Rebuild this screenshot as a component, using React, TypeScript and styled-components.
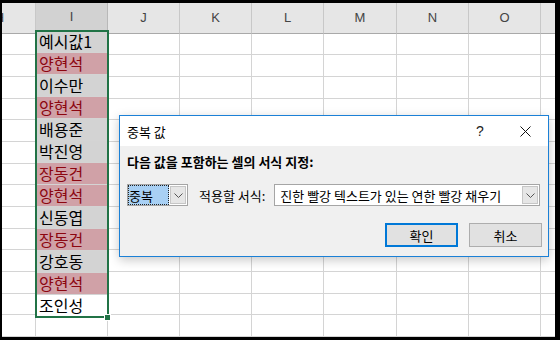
import React from "react";
import styled, { createGlobalStyle } from "styled-components";

const GlobalStyle = createGlobalStyle`
  html, body { margin: 0; padding: 0; }
  body { font-family: "Noto Sans CJK KR", "Noto Sans", sans-serif; }
`;

type Tone = "gray" | "pink" | "white";

const values: { text: string; tone: Tone }[] = [
  { text: "예시값1", tone: "gray" },
  { text: "양현석", tone: "pink" },
  { text: "이수만", tone: "gray" },
  { text: "양현석", tone: "pink" },
  { text: "배용준", tone: "gray" },
  { text: "박진영", tone: "gray" },
  { text: "장동건", tone: "pink" },
  { text: "양현석", tone: "pink" },
  { text: "신동엽", tone: "gray" },
  { text: "장동건", tone: "pink" },
  { text: "강호동", tone: "gray" },
  { text: "양현석", tone: "pink" },
  { text: "조인성", tone: "white" },
];

const ROWS = 14;

const otherColumns = [
  { name: "J", width: 72 },
  { name: "K", width: 72 },
  { name: "L", width: 72 },
  { name: "M", width: 73 },
  { name: "N", width: 72 },
  { name: "O", width: 72 },
  { name: "", width: 40 },
];

const Frame = styled.div`
  width: 560px;
  height: 340px;
  box-sizing: border-box;
  background: #000;
  padding: 3px 5px 3px 2px;
`;

const Sheet = styled.div`
  position: relative;
  width: 100%;
  height: 100%;
  background: #fff;
  overflow: hidden;
  display: flex;
`;

const Column = styled.div<{ $w: number; $offset?: number }>`
  flex: none;
  width: ${({ $w }) => $w}px;
  margin-left: ${({ $offset }) => $offset ?? 0}px;
  display: flex;
  flex-direction: column;
`;

const HeaderCell = styled.div<{ $selected?: boolean }>`
  height: 30px;
  box-sizing: content-box;
  border-bottom: 1px solid #a9a9a9;
  border-right: 1px solid ${({ $selected }) => ($selected ? "#b8b8b8" : "#c8c8c8")};
  background: ${({ $selected }) => ($selected ? "#d2d2d2" : "#e6e6e6")};
  color: #444;
  font-family: "Liberation Sans", Arial, sans-serif;
  font-size: 13px;
  display: flex;
  align-items: center;
  justify-content: center;
`;

const toneBg: Record<Tone, string> = {
  gray: "#d3d3d3",
  pink: "#d0a1a7",
  white: "#ffffff",
};

const Cell = styled.div<{ $tone?: Tone }>`
  height: 21px;
  border-bottom: 1px solid #d4d4d4;
  border-right: 1px solid #d4d4d4;
  background: ${({ $tone }) => toneBg[$tone ?? "white"]};
  color: ${({ $tone }) => ($tone === "pink" ? "#8c0610" : "#000")};
  font-size: 16px;
  line-height: 21px;
  padding-left: 3px;
  white-space: nowrap;
`;

const Selection = styled.div`
  position: relative;
  display: flex;
  flex-direction: column;

  &::after {
    content: "";
    position: absolute;
    left: -1px;
    top: -1px;
    right: -1px;
    bottom: -1px;
    border: 2px solid #217346;
    pointer-events: none;
  }
`;

const FillHandle = styled.div`
  position: absolute;
  right: -3px;
  bottom: -4px;
  width: 5px;
  height: 5px;
  background: #217346;
  border: 1px solid #fff;
  z-index: 1;
`;

const Dialog = styled.div`
  position: absolute;
  left: 117px;
  top: 112px;
  width: 430px;
  box-sizing: border-box;
  border: 1px solid #1b80d6;
  background: #f0f0f0;
  box-shadow: 0 3px 10px rgba(0, 0, 0, 0.22);
  font-size: 13px;
  color: #000;
`;

const TitleBar = styled.div`
  height: 30px;
  background: #fff;
  display: flex;
  align-items: center;
`;

const Title = styled.div`
  flex: 1;
  padding-left: 7px;
  font-size: 13px;
`;

const TitleButton = styled.div<{ $w: number }>`
  width: ${({ $w }) => $w}px;
  height: 30px;
  display: flex;
  align-items: center;
  justify-content: center;
  font-family: "Liberation Sans", Arial, sans-serif;
  font-size: 14px;
  color: #222;
`;

const Body = styled.div`
  padding: 8px 6px 9px 7px;
`;

const Heading = styled.div`
  font-weight: bold;
  font-size: 13px;
  line-height: 16px;
`;

const ControlsRow = styled.div`
  margin-top: 14px;
  height: 22px;
  display: flex;
  align-items: center;
`;

const Combo = styled.div<{ $w: number }>`
  width: ${({ $w }) => $w}px;
  height: 22px;
  box-sizing: border-box;
  border: 1px solid #a5a5a5;
  background: #fff;
  display: flex;
  align-items: stretch;
  flex: none;
`;

const ComboValue = styled.div<{ $focused?: boolean }>`
  flex: 1;
  display: flex;
  align-items: center;
  padding-left: ${({ $focused }) => ($focused ? 1 : 5)}px;
  font-size: 13px;
  white-space: nowrap;
  ${({ $focused }) =>
    $focused &&
    `
    background: #a8d0f4;
    outline: 1px dotted #222;
    outline-offset: -1px;
  `}
`;

const ComboArrow = styled.div`
  width: 16px;
  margin: 1px;
  box-sizing: border-box;
  border: 1px solid #c6c6c6;
  background: #e6e6e6;
  display: flex;
  align-items: center;
  justify-content: center;
`;

const FieldLabel = styled.div<{ $gap: number }>`
  margin: 0 ${({ $gap }) => $gap}px 0 11px;
  font-size: 13px;
  white-space: nowrap;
`;

const ButtonRow = styled.div`
  margin-top: 17px;
  display: flex;
  justify-content: flex-end;
  gap: 11px;
`;

const DialogButton = styled.div<{ $primary?: boolean }>`
  width: 73px;
  height: 24px;
  box-sizing: border-box;
  border: ${({ $primary }) => ($primary ? "2px solid #0078d7" : "1px solid #adadad")};
  background: #e1e1e1;
  display: flex;
  align-items: center;
  justify-content: center;
  font-size: 13px;
`;

const Chevron = () => (
  <svg width="9" height="5" viewBox="0 0 9 5">
    <path d="M0.5 0.5 L4.5 4.5 L8.5 0.5" fill="none" stroke="#555" strokeWidth="1" />
  </svg>
);

const CloseIcon = () => (
  <svg width="11" height="11" viewBox="0 0 11 11">
    <path d="M0.5 0.5 L10.5 10.5 M10.5 0.5 L0.5 10.5" stroke="#111" strokeWidth="1" />
  </svg>
);

const emptyCells = (n: number) => Array.from({ length: n }, (_, i) => <Cell key={i} />);

const App = () => {
  return (
    <Frame>
      <GlobalStyle />
      <Sheet>
        <Column $w={72} $offset={-38}>
          <HeaderCell>H</HeaderCell>
          {emptyCells(ROWS)}
        </Column>

        <Column $w={72}>
          <HeaderCell $selected>I</HeaderCell>
          <Selection>
            {values.map((v, i) => (
              <Cell key={i} $tone={v.tone}>
                {v.text}
              </Cell>
            ))}
            <FillHandle />
          </Selection>
          {emptyCells(ROWS - values.length)}
        </Column>

        {otherColumns.map((col, i) => (
          <Column key={i} $w={col.width}>
            <HeaderCell>{col.name}</HeaderCell>
            {emptyCells(ROWS)}
          </Column>
        ))}

        <Dialog>
          <TitleBar>
            <Title>중복 값</Title>
            <TitleButton $w={44}>?</TitleButton>
            <TitleButton $w={46}>
              <CloseIcon />
            </TitleButton>
          </TitleBar>
          <Body>
            <Heading>다음 값을 포함하는 셀의 서식 지정:</Heading>
            <ControlsRow>
              <Combo $w={61}>
                <ComboValue $focused>중복</ComboValue>
                <ComboArrow>
                  <Chevron />
                </ComboArrow>
              </Combo>
              <FieldLabel $gap={9}>적용할 서식:</FieldLabel>
              <Combo $w={266}>
                <ComboValue>진한 빨강 텍스트가 있는 연한 빨강 채우기</ComboValue>
                <ComboArrow>
                  <Chevron />
                </ComboArrow>
              </Combo>
            </ControlsRow>
            <ButtonRow>
              <DialogButton $primary>확인</DialogButton>
              <DialogButton>취소</DialogButton>
            </ButtonRow>
          </Body>
        </Dialog>
      </Sheet>
    </Frame>
  );
};

export default App;
